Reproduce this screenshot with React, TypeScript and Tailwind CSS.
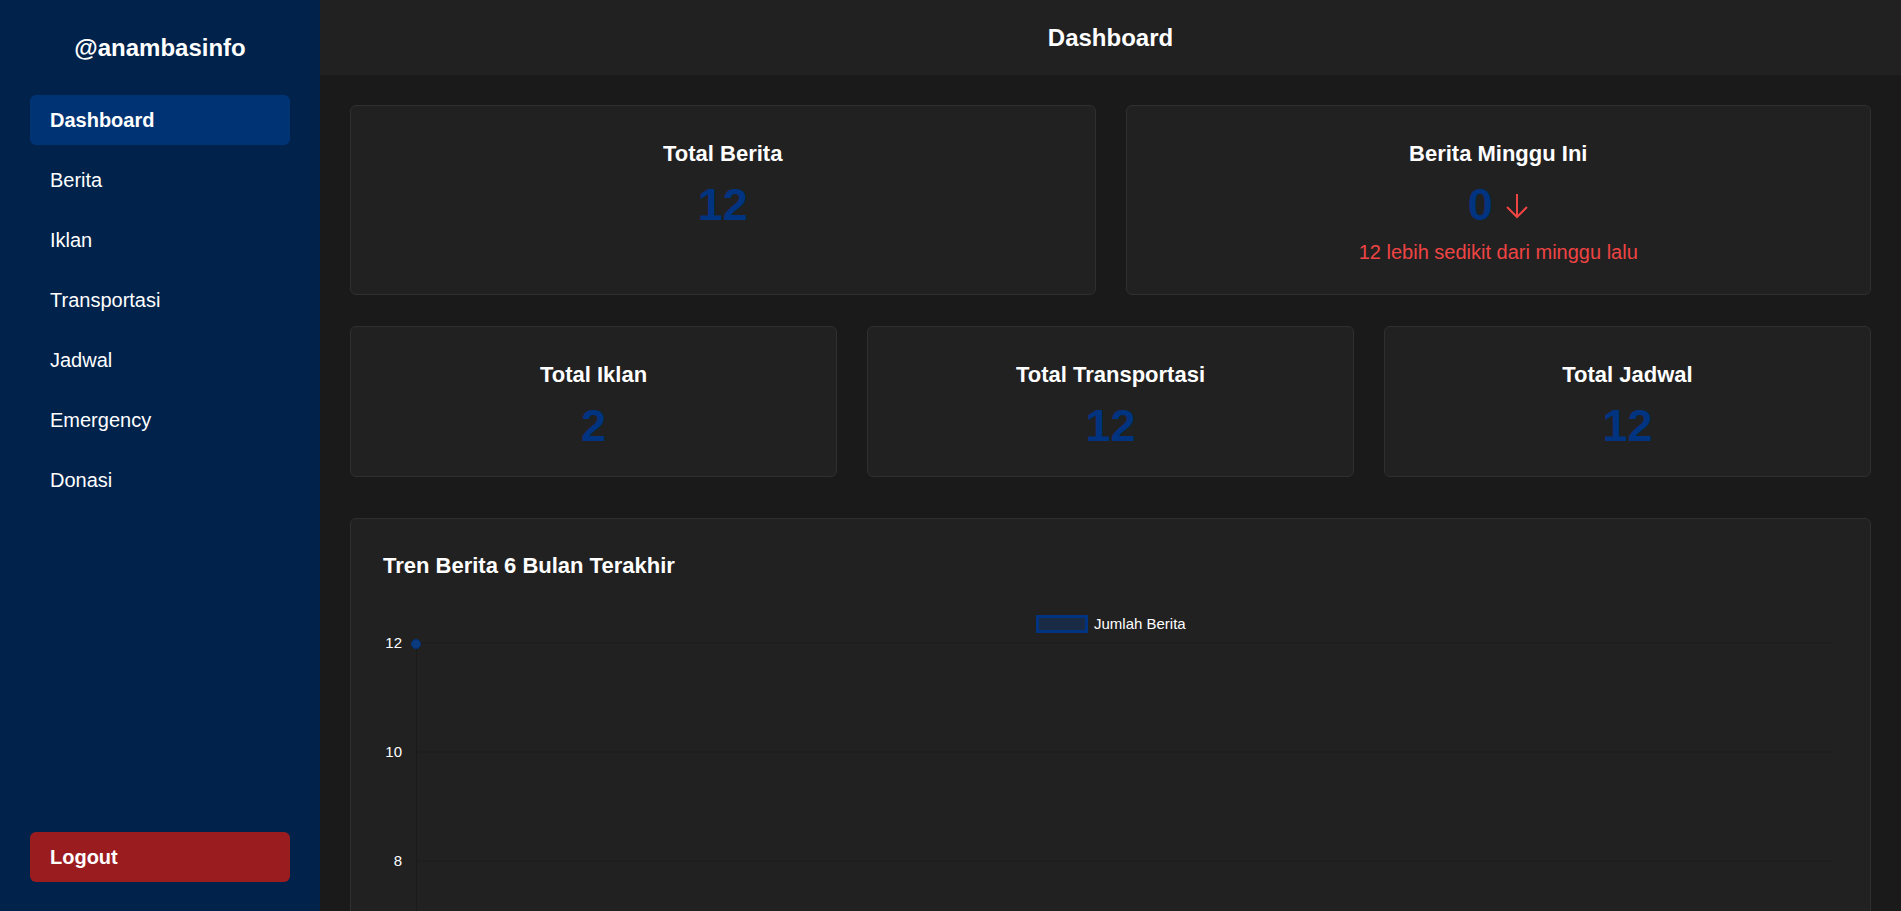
import React from 'react';

const navItems = ['Dashboard', 'Berita', 'Iklan', 'Transportasi', 'Jadwal', 'Emergency', 'Donasi'];

const StatCard: React.FC<{ title: string; value: number }> = ({ title, value }) => (
  <div className="bg-[#212121] border border-[#2f2f2f] rounded-md pt-[30px] pb-[26px] px-6 flex flex-col items-center text-center">
    <h3 className="text-[22px] leading-[36px] font-bold text-white">{title}</h3>
    <div className="mt-[9px] h-[48px] flex items-center justify-center">
      <span className="text-[45px] leading-[48px] font-bold text-[#003380]">{value}</span>
    </div>
  </div>
);

const TrendChart: React.FC = () => {
  // only the upper ticks are in view, the rest of the chart sits below the fold
  const ticks = [12, 10, 8];
  const top = 41;
  const step = 109;
  return (
    <svg width="1456" height="340" className="mt-[21px] block">
      {/* legend */}
      <rect x="654.5" y="14.5" width="49" height="15" fill="#1a2b45" stroke="#003380" strokeWidth="3" />
      <text x="711" y="27" fontSize="15" fill="#ffffff" fontFamily="Liberation Sans, Arial, sans-serif">
        Jumlah Berita
      </text>
      {[0, 1, 2, 3].map((i) => (
        <line key={i} x1="33" x2="1451" y1={top + i * step} y2={top + i * step} stroke="#1c1c1c" strokeWidth="1" />
      ))}
      {ticks.map((t, i) => (
        <text
          key={t}
          x="19"
          y={top + i * step + 5}
          fontSize="15"
          fill="#ffffff"
          textAnchor="end"
          fontFamily="Liberation Sans, Arial, sans-serif"
        >
          {t}
        </text>
      ))}
      <line x1="33.5" x2="33.5" y1={top} y2="340" stroke="#1a1a1a" strokeWidth="1" />
      <circle cx="33" cy="42" r="4.5" fill="#0b3a7d" stroke="#003380" strokeWidth="1" />
    </svg>
  );
};

export default function App() {
  return (
    <div className="flex h-screen overflow-hidden bg-[#1a1a1a] font-['Liberation_Sans',Arial,sans-serif]">
      {/* Sidebar */}
      <aside className="w-[320px] shrink-0 bg-[#00224b] px-[30px] pt-[30px] pb-[29px] flex flex-col">
        <h1 className="text-[24px] leading-[36px] font-bold text-white text-center">@anambasinfo</h1>
        <nav className="mt-[29px] flex flex-col gap-[10px]">
          {navItems.map((item, i) => (
            <a
              key={item}
              className={`h-[50px] flex items-center px-5 rounded-md text-[20px] text-white ${
                i === 0 ? 'bg-[#003374] font-bold' : ''
              }`}
            >
              {item}
            </a>
          ))}
        </nav>
        <button className="mt-auto h-[50px] flex items-center px-5 rounded-md bg-[#9b1c1f] text-[20px] font-bold text-white">
          Logout
        </button>
      </aside>

      {/* Main */}
      <main className="flex-1 flex flex-col overflow-hidden">
        <header className="h-[75px] shrink-0 bg-[#212121] flex items-center justify-center">
          <h2 className="text-[24px] font-bold text-white">Dashboard</h2>
        </header>

        <div className="p-[30px]">
          <div className="grid grid-cols-2 gap-[30px]">
            <StatCard title="Total Berita" value={12} />
            <div className="bg-[#212121] border border-[#2f2f2f] rounded-md pt-[30px] pb-[28px] px-6 flex flex-col items-center text-center">
              <h3 className="text-[22px] leading-[36px] font-bold text-white">Berita Minggu Ini</h3>
              <div className="mt-[9px] h-[48px] flex items-center justify-center gap-[12px]">
                <span className="text-[45px] leading-[48px] font-bold text-[#003380]">0</span>
                <svg width="24" height="28" viewBox="0 0 24 28" className="mt-[2px]">
                  <path d="M12 2V25M2 15L12 25L22 15" fill="none" stroke="#ef4444" strokeWidth="2" />
                </svg>
              </div>
              <p className="mt-[9px] text-[20px] leading-[28px] text-[#ef4444]">12 lebih sedikit dari minggu lalu</p>
            </div>
          </div>

          <div className="grid grid-cols-3 gap-[30px] mt-[31px]">
            <StatCard title="Total Iklan" value={2} />
            <StatCard title="Total Transportasi" value={12} />
            <StatCard title="Total Jadwal" value={12} />
          </div>

          <div className="mt-[41px] bg-[#212121] border border-[#2f2f2f] rounded-md p-8">
            <h3 className="text-[22px] leading-[30px] font-bold text-white">Tren Berita 6 Bulan Terakhir</h3>
            <TrendChart />
          </div>
        </div>
      </main>
    </div>
  );
}
